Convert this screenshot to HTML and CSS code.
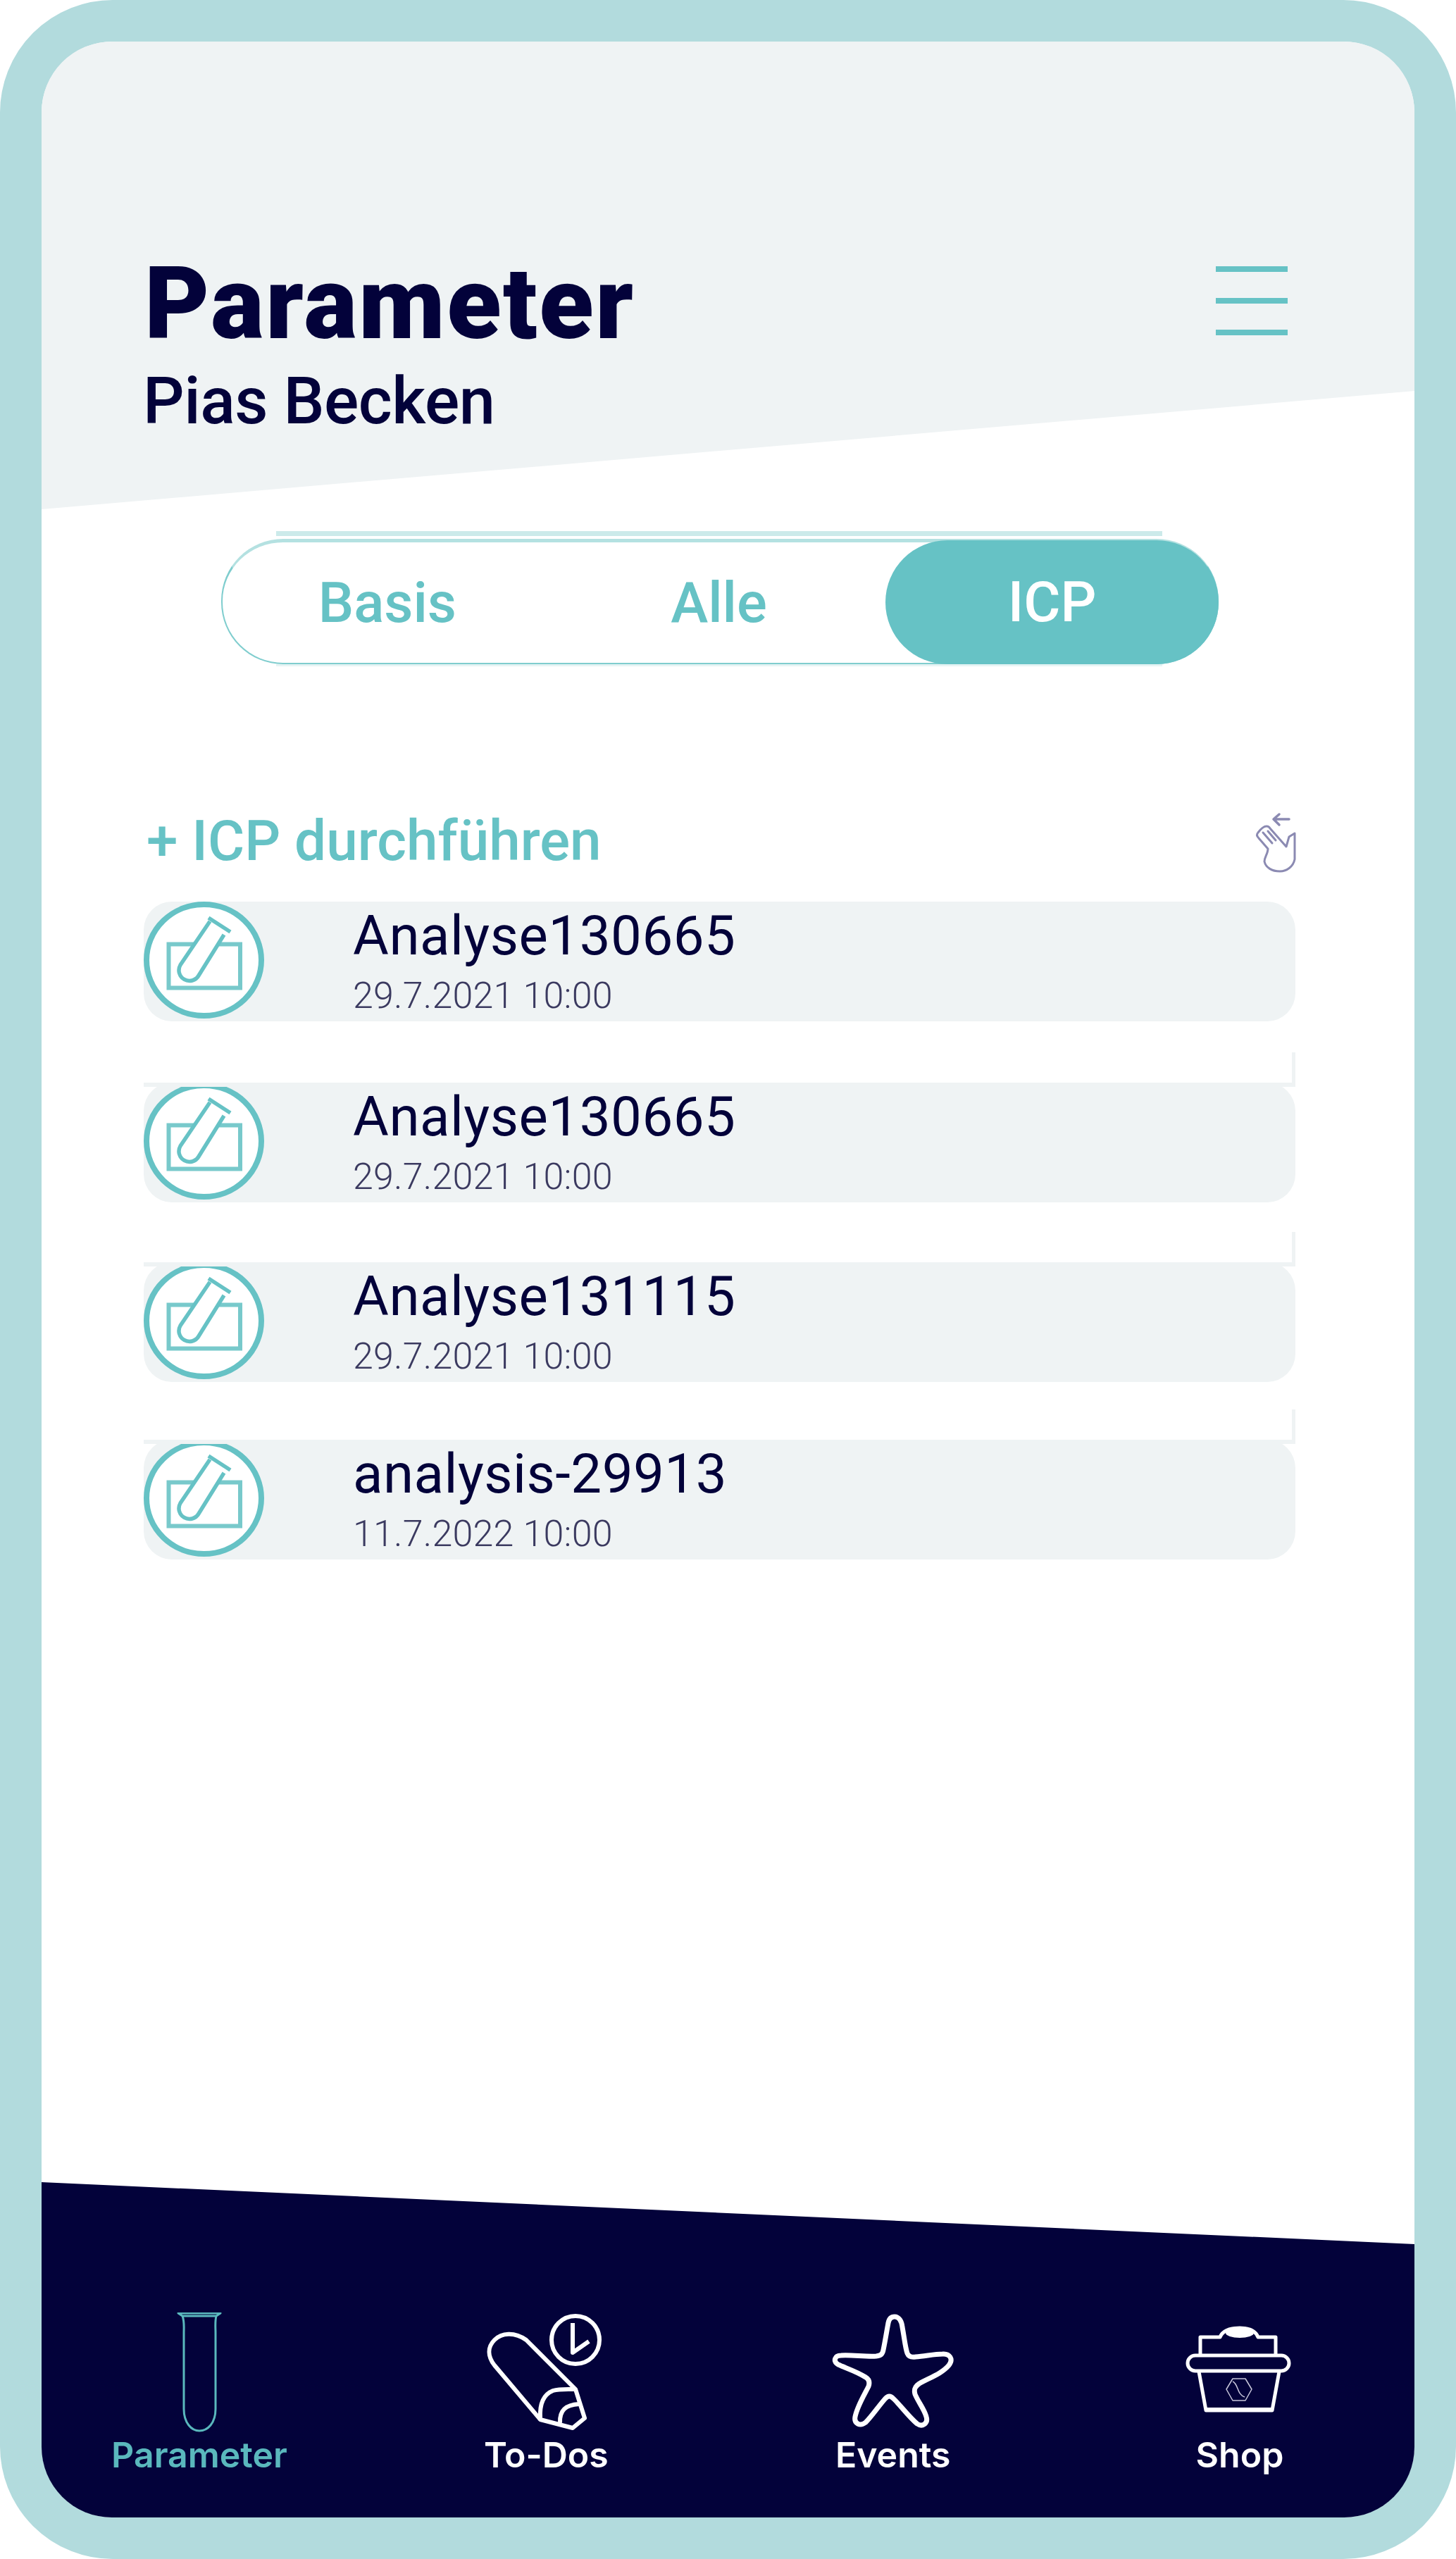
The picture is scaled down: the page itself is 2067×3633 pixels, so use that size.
FILE: index.html
```html
<!DOCTYPE html>
<html lang="de">
<head>
    <meta charset="UTF-8">
    <meta name="viewport" content="width=device-width, initial-scale=1.0">
    <title>Parameter | Pias Becken</title>
    <link rel="stylesheet" href="styles.css">
</head>
<body>
    <div class="phone">
        <header class="top">
            <div class="titles">
                <h1>Parameter</h1>
                <p>Pias Becken</p>
            </div>
            <div class="menu-btn"><span></span><span></span><span></span></div>
        </header>

        <main>
            <div class="tabs">
                <div class="tab">Basis</div>
                <div class="tab">Alle</div>
                <div class="tab active">ICP</div>
            </div>

            <div class="action-row">
                <span class="action">+ ICP durchführen</span>
                <svg class="swipe-icon" viewBox="1780 1150 64 95" fill="none" stroke="#8b8ab2" stroke-width="3" stroke-linejoin="round" stroke-linecap="round">
                    <path d="M1830 1163H1809M1816 1156L1808 1163L1816 1171" stroke-width="3.5"/>
                    <path d="M1798 1173C1800 1173 1802 1174 1803 1176L1826 1202L1830 1188L1838 1183V1220C1836 1230 1827 1237 1817 1237C1806 1237 1797 1232 1795 1223C1795 1217 1800 1212 1800 1205L1787 1190C1784 1187 1784 1184 1786 1182C1789 1178 1793 1173 1798 1173Z"/>
                    <path d="M1793 1182L1806 1197M1800 1180L1811 1193"/>
                </svg>
            </div>

            <ul class="analyses">
                <li class="analysis">
                    <svg class="tube-badge" viewBox="14 20 172 170"><use href="#badge"/></svg>
                    <div>
                        <div class="analysis-name">Analyse130665</div>
                        <div class="analysis-date">29.7.2021 10:00</div>
                    </div>
                </li>
                <li class="analysis">
                    <svg class="tube-badge" viewBox="14 20 172 170"><use href="#badge"/></svg>
                    <div>
                        <div class="analysis-name">Analyse130665</div>
                        <div class="analysis-date">29.7.2021 10:00</div>
                    </div>
                </li>
                <li class="analysis">
                    <svg class="tube-badge" viewBox="14 20 172 170"><use href="#badge"/></svg>
                    <div>
                        <div class="analysis-name">Analyse131115</div>
                        <div class="analysis-date">29.7.2021 10:00</div>
                    </div>
                </li>
                <li class="analysis">
                    <svg class="tube-badge" viewBox="14 20 172 170"><use href="#badge"/></svg>
                    <div>
                        <div class="analysis-name">analysis-29913</div>
                        <div class="analysis-date">11.7.2022 10:00</div>
                    </div>
                </li>
            </ul>
        </main>

        <nav class="bottom-nav">
            <a class="nav-item current">
                <svg viewBox="193 3283 180 170" fill="none" stroke="#5ab8bd" stroke-width="3" stroke-linejoin="round">
                    <path d="M253 3284H313L307 3288H259Z"/>
                    <path d="M259 3288C262 3296 261 3304 261 3312V3420C261 3440 272 3451 283 3451C295 3451 306 3440 306 3420V3312C306 3304 305 3296 307 3288"/>
                </svg>
                Parameter
            </a>
            <a class="nav-item">
                <svg viewBox="685 3283 180 170" fill="none" stroke="#fff" stroke-width="6" stroke-linejoin="round">
                    <circle cx="817" cy="3322" r="34"/>
                    <path d="M813 3298V3340L836 3324"/>
                    <path d="M767 3435L702 3358C692 3345 692 3332 702 3322C712 3312 730 3310 747 3322L817 3392L830 3433L813 3447Z"/>
                    <path d="M767 3433C766 3415 770 3400 785 3394C795 3391 808 3392 817 3392"/>
                    <path d="M795 3440C794 3422 803 3414 822 3413"/>
                </svg>
                To-Dos
            </a>
            <a class="nav-item">
                <svg viewBox="1177 3283 180 170" fill="none" stroke="#fff" stroke-width="7" stroke-linejoin="round">
                    <path d="M1269 3289C1275 3289 1279 3295 1280 3304C1283 3320 1284 3332 1287 3341C1289 3346 1293 3347 1299 3346C1313 3345 1325 3342 1337 3342C1347 3341 1353 3349 1346 3358C1336 3370 1318 3376 1304 3384C1298 3388 1296 3392 1298 3399C1303 3411 1311 3420 1314 3431C1317 3441 1308 3446 1301 3441C1288 3430 1276 3413 1267 3405C1263 3401 1260 3401 1256 3405C1247 3415 1237 3430 1228 3439C1220 3445 1211 3441 1213 3431C1216 3416 1226 3400 1232 3388C1234 3382 1233 3378 1228 3375C1216 3367 1200 3362 1189 3357C1181 3352 1184 3344 1193 3344C1208 3343 1228 3346 1243 3345C1250 3344 1252 3342 1253 3336C1256 3322 1258 3308 1260 3298C1261 3292 1264 3289 1269 3289Z"/>
                </svg>
                Events
            </a>
            <a class="nav-item">
                <svg viewBox="1670 3283 180 170" fill="none" stroke="#fff" stroke-width="5" stroke-linejoin="round">
                    <path d="M1704 3343V3318H1732C1736 3308 1748 3305 1760 3305C1772 3305 1782 3308 1786 3318H1811V3343"/>
                    <ellipse cx="1760" cy="3312" rx="20" ry="7" fill="#fff" stroke="none"/>
                    <rect x="1686" y="3344" width="144" height="22" rx="11"/>
                    <path d="M1702 3367L1712 3422H1806L1816 3367"/>
                    <path d="M1712 3421H1806" stroke-width="6"/>
                    <path d="M1750 3377H1768L1777 3392L1768 3408H1750L1741 3392ZM1750 3381C1758 3384 1756 3400 1767 3403" stroke-width="1.5" stroke="#c9c8dc"/>
                </svg>
                Shop
            </a>
        </nav>
    </div>

    <!-- shared icon of the analysis list -->
    <svg class="defs" aria-hidden="true">
        <defs>
            <g id="badge">
                <ellipse cx="99.5" cy="103" rx="81.5" ry="79" fill="#fff" stroke="#66c2c5" stroke-width="8"/>
                <rect x="49.5" y="80.5" width="101.5" height="62" fill="none" stroke="#78c9cb" stroke-width="6"/>
                <path d="M108 48L66 110A15 15 0 0 0 92 125L128 67" fill="#fff" stroke="#66c2c5" stroke-width="5.5"/>
                <path d="M106 43L137 63" fill="none" stroke="#66c2c5" stroke-width="5.5"/>
            </g>
        </defs>
    </svg>
</body>
</html>
```

FILE: styles.css
```css
* {
    box-sizing: border-box;
}
body {
    margin: 0;
    background-color: #fff;
    font-family: Roboto, "Liberation Sans", sans-serif;
    color: #03023a;
}
.defs {
    display: none;
}
.phone {
    width: 2067px;
    height: 3633px;
    border: 59px solid #b2dbdd;
    border-radius: 160px;
    display: flex;
    flex-direction: column;
}
.phone > * {
    flex-shrink: 0;
}

/* header with the slanted edge */
.top {
    height: 664px;
    padding: 308px 180px 0 146px;
    display: flex;
    justify-content: space-between;
    align-items: flex-start;
    background-color: #eff3f4;
    border-radius: 100px 100px 0 0;
    clip-path: polygon(0 0, 100% 0, 100% 496px, 0 100%);
}
.titles h1 {
    margin: 0;
    font-size: 142px;
    font-weight: 900;
    line-height: 130px;
    letter-spacing: 2.5px;
}
.titles p {
    margin: 23px 0 0 -2px;
    font-size: 92px;
    font-weight: 500;
    line-height: 100px;
    letter-spacing: -0.5px;
}
.menu-btn {
    width: 102px;
    margin-top: 11px;
    display: flex;
    flex-direction: column;
    gap: 37px;
}
.menu-btn span {
    height: 8px;
    background-color: #66c2c5;
}

main {
    flex: 1;
    padding: 42px 169px 0 145px;
    display: flex;
    flex-direction: column;
    min-height: 0;
}

/* segmented control */
.tabs {
    position: relative;
    width: 1416px;
    height: 178px;
    margin-left: 110px;
    display: grid;
    grid-template-columns: repeat(3, 1fr);
    border: 2px solid #7fcdce;
    border-top: 5px solid #b4e1e1;
    border-radius: 88px;
}
.tabs::before,
.tabs::after {
    content: "";
    position: absolute;
    left: 76px;
    right: 78px;
}
.tabs::before {
    top: -16px;
    height: 7px;
    background-color: #cceaea;
}
.tabs::after {
    bottom: -5px;
    height: 3px;
    background-color: #e6f4f4;
}
.tab {
    padding-right: 3px;
    display: flex;
    align-items: center;
    justify-content: center;
    font-size: 80px;
    font-weight: 500;
    color: #66c2c5;
}
.tab.active {
    margin: -3px -2px -2px 0;
    padding-right: 0;
    border-radius: 88px;
    background-color: #66c2c5;
    color: #fff;
}

.action-row {
    margin-top: 205px;
    height: 132px;
    display: flex;
    justify-content: space-between;
    align-items: flex-start;
}
.action {
    margin-left: 4px;
    font-size: 80px;
    font-weight: 500;
    line-height: 92px;
    color: #66c2c5;
}
.swipe-icon {
    width: 64px;
    height: 95px;
    margin: 2px -5px 0 0;
}

.analyses {
    margin: 0;
    padding: 0;
    list-style: none;
    display: flex;
    flex-direction: column;
    gap: 85px;
}
.analysis {
    position: relative;
    height: 170px;
    padding-right: 40px;
    display: flex;
    align-items: flex-start;
    gap: 125px;
    background-color: #eff3f4;
    border-radius: 40px;
}
.analysis:nth-child(2) {
    margin-top: 2px;
}
.analysis:nth-child(4) {
    margin-top: -3px;
}
/* leftover edge of the row above */
.analysis + .analysis::before {
    content: "";
    position: absolute;
    left: 0;
    right: 0;
    top: -43px;
    height: 43px;
    border-right: 5px solid #eff3f4;
    border-bottom: 6px solid #eff3f4;
}
.tube-badge {
    width: 172px;
    height: 170px;
    flex-shrink: 0;
}
.analysis-name {
    margin-top: 4px;
    font-size: 78px;
    line-height: 90px;
    letter-spacing: 0.5px;
}
.analysis-date {
    margin-top: 10px;
    font-size: 52px;
    font-weight: 300;
    line-height: 60px;
    letter-spacing: 0.2px;
    color: #3b3a60;
}

/* bottom navigation */
.bottom-nav {
    height: 476px;
    padding: 185px 24px 0 0;
    display: flex;
    justify-content: space-between;
    align-items: flex-start;
    background-color: #03023a;
    border-radius: 0 0 100px 100px;
    clip-path: polygon(0 0, 100% 88px, 100% 100%, 0 100%);
}
.nav-item {
    width: 448px;
    display: flex;
    flex-direction: column;
    align-items: center;
    font-family: Inter, Roboto, sans-serif;
    font-size: 50px;
    font-weight: 600;
    line-height: 58px;
    color: #fff;
}
.nav-item svg {
    width: 180px;
    height: 170px;
    margin-bottom: 3px;
}
.nav-item.current {
    color: #5ab8bd;
}
```
